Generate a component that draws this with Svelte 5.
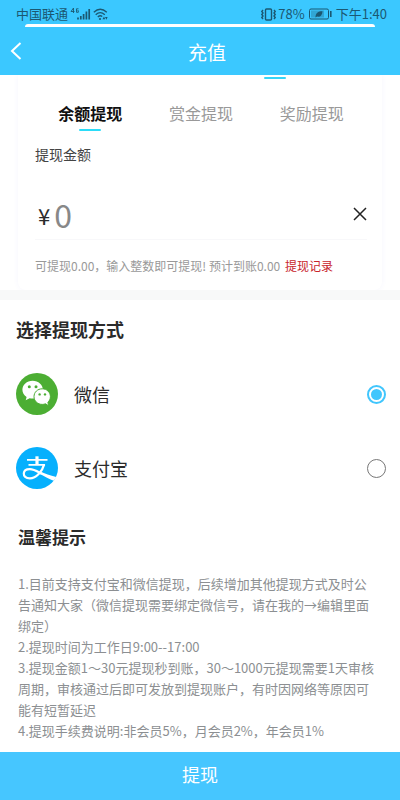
<script lang="ts">
  const tabs = ['余额提现', '赏金提现', '奖励提现'];

  const notes = [
    '1.目前支持支付宝和微信提现，后续增加其他提现方式及时公告通知大家（微信提现需要绑定微信号，请在我的→编辑里面绑定）',
    '2.提现时间为工作日9:00--17:00',
    '3.提现金额1～30元提现秒到账，30～1000元提现需要1天审核周期，审核通过后即可发放到提现账户，有时因网络等原因可能有短暂延迟',
    '4.提现手续费说明:非会员5%，月会员2%，年会员1%'
  ];

  let activeTab = $state(0);
  let amount = $state('');
  let method = $state('wechat');
</script>

<div class="page">
  <div class="top">
    <div class="status">
      <div class="status-group">
        <span>中国联通</span>
        <svg width="21" height="14" viewBox="0 0 21 14" aria-hidden="true">
          <g fill="none" stroke="currentColor">
            <path d="M3.5 6V1L1 4.5H4.5M8.5 1.8H6.5V5.3H8.3V3.6H7.5" stroke-width="0.9" />
            <path d="M8 12.5V10.5M10.8 12.5V9M13.6 12.5V7M16.4 12.5V4.5M19.2 12.5V2" stroke-width="1.7" />
          </g>
        </svg>
        <svg width="15" height="13" viewBox="0 0 15 13" aria-hidden="true">
          <g fill="none" stroke="currentColor" stroke-width="1.3">
            <path d="M0.8 4.2Q7.2 -1.6 13.8 4.2M2.7 6.7Q7.2 2.6 11.8 6.7M4.8 9Q7.2 6.8 9.2 8.6" />
          </g>
          <circle cx="7" cy="11" r="1.1" fill="currentColor" />
          <path d="M9.5 11.2L11 8.6L12.2 11.2ZM12 9L14.6 9L13.4 11.8Z" fill="currentColor" />
        </svg>
      </div>
      <div class="status-group">
        <svg width="17" height="13" viewBox="0 0 17 13" aria-hidden="true">
          <g fill="none" stroke="currentColor" stroke-width="1.4">
            <rect x="5.5" y="1" width="6" height="11" rx="1" />
            <path d="M3 2L1.8 3.5L3 5L1.8 6.5L3 8L1.8 9.5L3 11M14 2L15.2 3.5L14 5L15.2 6.5L14 8L15.2 9.5L14 11" />
          </g>
        </svg>
        <span>78%</span>
        <svg class="battery" width="23" height="12" viewBox="0 0 23 12" aria-hidden="true">
          <rect x="0.5" y="1" width="19" height="10" rx="1.5" fill="none" stroke="currentColor" />
          <rect x="2" y="2.5" width="13" height="7" fill="currentColor" opacity="0.3" />
          <path d="M6.5 9.5C6.5 5 9 3.2 13.5 3.2C13.3 7 11.5 9.3 8 8.6Z" fill="currentColor" />
          <path d="M21.8 3V9" stroke="currentColor" stroke-width="1.6" />
        </svg>
        <span>下午1:40</span>
      </div>
    </div>
    <div class="sheet-edge"></div>
    <header class="nav">
      <button type="button" class="back" aria-label="返回">
        <svg width="12" height="20" viewBox="0 0 12 20" aria-hidden="true">
          <path d="M10.5 2L2 10L10.5 18" fill="none" stroke="currentColor" stroke-width="2" />
        </svg>
      </button>
      <h1>充值</h1>
    </header>
  </div>

  <main>
    <section class="card">
      <div class="scrolled-tab"></div>
      <div class="tabs" role="tablist">
        {#each tabs as tab, i}
          <button
            type="button"
            role="tab"
            class="tab"
            class:active={activeTab === i}
            aria-selected={activeTab === i}
            onclick={() => (activeTab = i)}
          >
            {tab}
          </button>
        {/each}
      </div>

      <label class="label" for="amount">提现金额</label>
      <div class="amount-row">
        <span class="currency">¥</span>
        <input id="amount" type="text" inputmode="numeric" placeholder="0" bind:value={amount} />
        <button type="button" class="clear" aria-label="清空" onclick={() => (amount = '')}>
          <svg width="14" height="14" viewBox="0 0 14 14" aria-hidden="true">
            <path d="M1 1L13 13M13 1L1 13" fill="none" stroke="currentColor" stroke-width="1.5" />
          </svg>
        </button>
      </div>
      <p class="hint">可提现0.00，输入整数即可提现! 预计到账0.00 <a href="#records">提现记录</a></p>
    </section>

    <section class="methods">
      <h2>选择提现方式</h2>
      <label class="method">
        <svg width="42" height="42" viewBox="0 0 42 42" aria-hidden="true">
          <circle cx="21" cy="21" r="21" fill="#4cae33" />
          <path
            d="M16.6 7.7C10.8 7.7 6.4 11.7 6.4 16.7C6.4 19.6 7.9 22.2 10.6 23.9L9.7 27.3L13.6 25.2C14.6 25.5 15.6 25.6 16.6 25.6C22.4 25.6 26.9 21.7 26.9 16.7S22.4 7.7 16.6 7.7Z"
            fill="#fff"
          />
          <path
            d="M26.2 15.8C21.6 15.8 18 19.2 18 23.6S21.6 31.4 26.2 31.4C27.4 31.4 28.5 31.2 29.5 30.8L32.6 32.8L31.9 29.3C33.4 27.9 34.4 25.9 34.4 23.6C34.4 19.2 30.8 15.8 26.2 15.8Z"
            fill="#fff"
            stroke="#4cae33"
            stroke-width="1"
          />
          <g fill="#4cae33">
            <circle cx="13.3" cy="13.7" r="1.5" />
            <circle cx="20" cy="13.7" r="1.5" />
            <circle cx="23.6" cy="21.4" r="1.2" />
            <circle cx="29" cy="21.4" r="1.2" />
          </g>
        </svg>
        <span>微信</span>
        <input type="radio" name="method" value="wechat" bind:group={method} />
      </label>
      <label class="method">
        <svg width="42" height="42" viewBox="0 0 42 42" aria-hidden="true">
          <circle cx="21" cy="21" r="21" fill="#06b0fd" />
          <g fill="none" stroke="#fff">
            <path d="M11 12.8H31.5M12.5 17.9H29" stroke-width="1.8" />
            <path d="M21 9.3V18" stroke-width="3.2" />
            <path
              d="M28.2 17.4C26.6 23.5 20.4 31.4 13.8 31.4C9.8 31.4 7.6 29.2 7.8 26.4C8 23.8 10.6 22.2 13.8 22.2C18 22.2 22 24.8 26 26.8"
              stroke-width="2.2"
            />
          </g>
          <path d="M24 24.5C29 26.7 34 28.6 40.3 30A21 21 0 0 1 37.6 33.8C33 32 28 29.4 23.2 26.6Z" fill="#fff" />
        </svg>
        <span>支付宝</span>
        <input type="radio" name="method" value="alipay" bind:group={method} />
      </label>
    </section>

    <section class="tips">
      <h3>温馨提示</h3>
      {#each notes as note}
        <p>{note}</p>
      {/each}
    </section>
  </main>

  <button type="button" class="submit">提现</button>
</div>

<style>
  :global(body) {
    margin: 0;
    background: #fff;
  }

  .page {
    min-height: 100vh;
    display: flex;
    flex-direction: column;
    font-family: 'Noto Sans CJK SC', sans-serif;
    color: #2b2b2b;
  }

  h1,
  h2,
  h3,
  p {
    margin: 0;
  }

  button {
    border: none;
    padding: 0;
    background: none;
    color: inherit;
    font: inherit;
    cursor: pointer;
  }

  svg {
    display: block;
    flex: none;
  }

  .top {
    position: sticky;
    top: 0;
    z-index: 1;
    background: #3bc8ff;
  }

  .status {
    display: flex;
    justify-content: space-between;
    padding: 4px 13px 0 16px;
    color: #1b5872;
    font-size: 13px;
    line-height: 20px;
  }

  .status-group {
    display: flex;
    align-items: center;
    gap: 2px;
  }

  .status-group:last-child {
    gap: 1px;
  }

  .battery {
    margin: 0 3px;
  }

  .sheet-edge {
    height: 3px;
    margin: 0 25px;
    border-radius: 8px 8px 0 0;
    background: #fff;
  }

  .nav {
    display: grid;
    grid-template-columns: 32px 1fr 32px;
    align-items: center;
    height: 48px;
    padding: 0 4px;
    color: #fff;
  }

  .nav h1 {
    grid-column: 2;
    padding-left: 14px;
    text-align: center;
    font-size: 19px;
    font-weight: 400;
  }

  .back {
    display: flex;
    padding: 8px 6px;
  }

  .card {
    margin: 0 18px;
    padding: 2px 15px 14px 17px;
    border-radius: 0 0 8px 8px;
    background: #fff;
    box-shadow: 0 0 6px #f6f6fd;
  }

  .scrolled-tab {
    width: 22px;
    height: 2px;
    margin-left: 69%;
    border-radius: 1px;
    background: #35d4f8;
  }

  .tabs {
    display: grid;
    grid-template-columns: repeat(3, 1fr);
    margin-top: 22px;
  }

  .tab {
    display: flex;
    flex-direction: column;
    align-items: center;
    gap: 4px;
    color: #999;
    font-size: 16px;
    line-height: 24px;
  }

  .tab::after {
    content: '';
    width: 22px;
    height: 2px;
    border-radius: 1px;
  }

  .tab.active {
    color: #111;
    font-weight: 700;
  }

  .tab.active::after {
    background: #2bdcf8;
  }

  .label {
    display: block;
    margin-top: 13px;
    color: #444;
    font-size: 14px;
    line-height: 20px;
  }

  .amount-row {
    display: flex;
    align-items: center;
    gap: 4px;
    height: 50px;
    margin-top: 25px;
    padding-left: 3px;
    border-bottom: 1px solid #f8f8fa;
  }

  .currency {
    padding-top: 2px;
    font-size: 22px;
    line-height: 30px;
  }

  .amount-row input {
    flex: 1;
    min-width: 0;
    height: 48px;
    padding: 0;
    border: none;
    outline: none;
    background: none;
    color: #2b2b2b;
    font: inherit;
    font-size: 32px;
  }

  .amount-row input::placeholder {
    color: #888;
    opacity: 1;
  }

  .clear {
    color: #222;
  }

  .hint {
    margin-top: 16px;
    color: #999;
    font-size: 12px;
    line-height: 20px;
  }

  .hint a {
    margin-left: 2px;
    color: #c8242b;
    text-decoration: none;
  }

  .methods {
    border-top: 10px solid #f8f9f9;
    padding: 15px 14px 0 16px;
  }

  .methods h2 {
    margin-bottom: 30px;
    font-size: 18px;
    line-height: 28px;
  }

  .method {
    display: flex;
    align-items: center;
    gap: 16px;
    margin-bottom: 32px;
    font-size: 18px;
    line-height: 28px;
    cursor: pointer;
  }

  .method input {
    appearance: none;
    width: 19px;
    height: 19px;
    margin: 0 0 0 auto;
    border: 1px solid #777;
    border-radius: 50%;
    background: #fff;
  }

  .method input:checked {
    border: 2px solid #41c6fd;
    padding: 2px;
    background: #41c6fd content-box;
  }

  .tips {
    padding: 4px 22px 10px 18px;
  }

  .tips h3 {
    margin-bottom: 24px;
    font-size: 17px;
    line-height: 24px;
  }

  .tips p {
    color: #8c8f92;
    font-size: 13px;
    line-height: 21px;
  }

  .submit {
    position: sticky;
    bottom: 0;
    height: 48px;
    margin-top: auto;
    padding-bottom: 4px;
    background: #46c6ff;
    color: #fff;
    font-size: 18px;
  }
</style>
